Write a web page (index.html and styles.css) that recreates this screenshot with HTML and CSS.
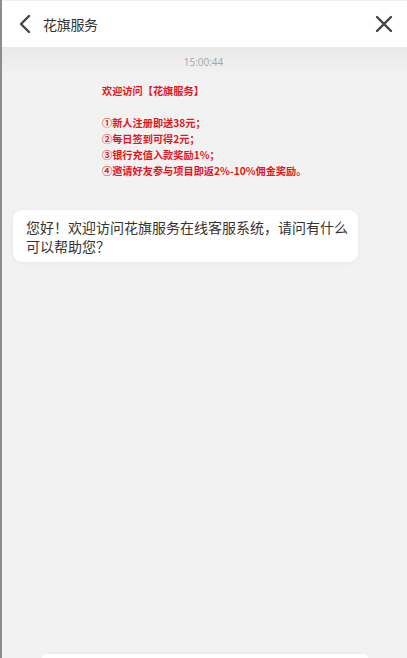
FILE: index.html
```html
<!DOCTYPE html>
<html lang="zh">
<head>
<meta charset="utf-8">
<title>花旗服务</title>
<link rel="stylesheet" href="styles.css">
</head>
<body>
<div class="page">
  <header class="topbar">
    <div class="left">
      <svg class="back" width="14" height="20" viewBox="0 0 14 20"><path d="M11 2 L3 10 L11 18" fill="none" stroke="#444" stroke-width="2.4" stroke-linecap="round" stroke-linejoin="round"/></svg>
      <span class="title">花旗服务</span>
    </div>
    <svg class="close" width="18" height="18" viewBox="0 0 18 18"><path d="M2 2 L16 16 M16 2 L2 16" fill="none" stroke="#444" stroke-width="2.4" stroke-linecap="round"/></svg>
  </header>
  <main class="chat">
    <div class="time">15:00:44</div>
    <div class="notice">
      <p>欢迎访问【花旗服务】</p>
      <p class="blank">&nbsp;</p>
      <p>①新人注册即送38元；</p>
      <p>②每日签到可得2元；</p>
      <p>③银行充值入款奖励1%；</p>
      <p>④邀请好友参与项目即返2%-10%佣金奖励。</p>
    </div>
    <div class="bubble">您好！欢迎访问花旗服务在线客服系统，请问有什么可以帮助您？</div>
    <div class="spacer"></div>
    <div class="inputbox"></div>
  </main>
</div>
</body>
</html>
```
FILE: styles.css
```css
* { box-sizing: border-box; }
html, body { margin: 0; padding: 0; }
body {
  font-family: "Noto Sans CJK SC", "Noto Sans", sans-serif;
  background: #f2f2f2;
}
.page {
  width: 407px;
  height: 658px;
  overflow: hidden;
  border-left: 2px solid #8c8c8c;
  display: flex;
  flex-direction: column;
  background: #f2f2f2;
}
.topbar {
  height: 47px;
  flex: 0 0 47px;
  background: #fff;
  border-top: 1px solid #f6eeee;
  display: flex;
  align-items: center;
  justify-content: space-between;
  padding: 0 14px 0 16px;
}
.left { display: flex; align-items: center; }
.back { display: block; }
.title {
  margin-left: 11px;
  font-size: 14px;
  color: #333;
  letter-spacing: -0.3px;
}
.close { display: block; }
.chat {
  flex: 1;
  display: flex;
  flex-direction: column;
  background: linear-gradient(#e9e9e9 0, #f2f2f2 30px);
}
.time {
  margin-top: 8px;
  text-align: center;
  font-size: 10px;
  line-height: 14px;
  color: #a6a6a6;
  font-family: "Open Sans", sans-serif;
  padding-right: 2px;
}
.notice {
  margin-top: 14px;
  margin-left: 100px;
  color: #e8141b;
  font-weight: bold;
  font-size: 10.2px;
  line-height: 16px;
}
.notice p { margin: 0; }
.bubble {
  margin: 31px 0 0 11px;
  width: 345px;
  background: #fff;
  border-radius: 9px;
  box-shadow: 0 1px 5px rgba(0,0,0,0.05);
  padding: 8px 10px 6px 13px;
  font-size: 14px;
  line-height: 19px;
  color: #333;
}
.spacer { flex: 1; }
.inputbox {
  flex: 0 0 4px;
  margin-left: 40px;
  width: 326px;
  background: #fff;
  border-radius: 6px 6px 0 0;
  box-shadow: 0 0 4px rgba(0,0,0,0.05);
}
```
